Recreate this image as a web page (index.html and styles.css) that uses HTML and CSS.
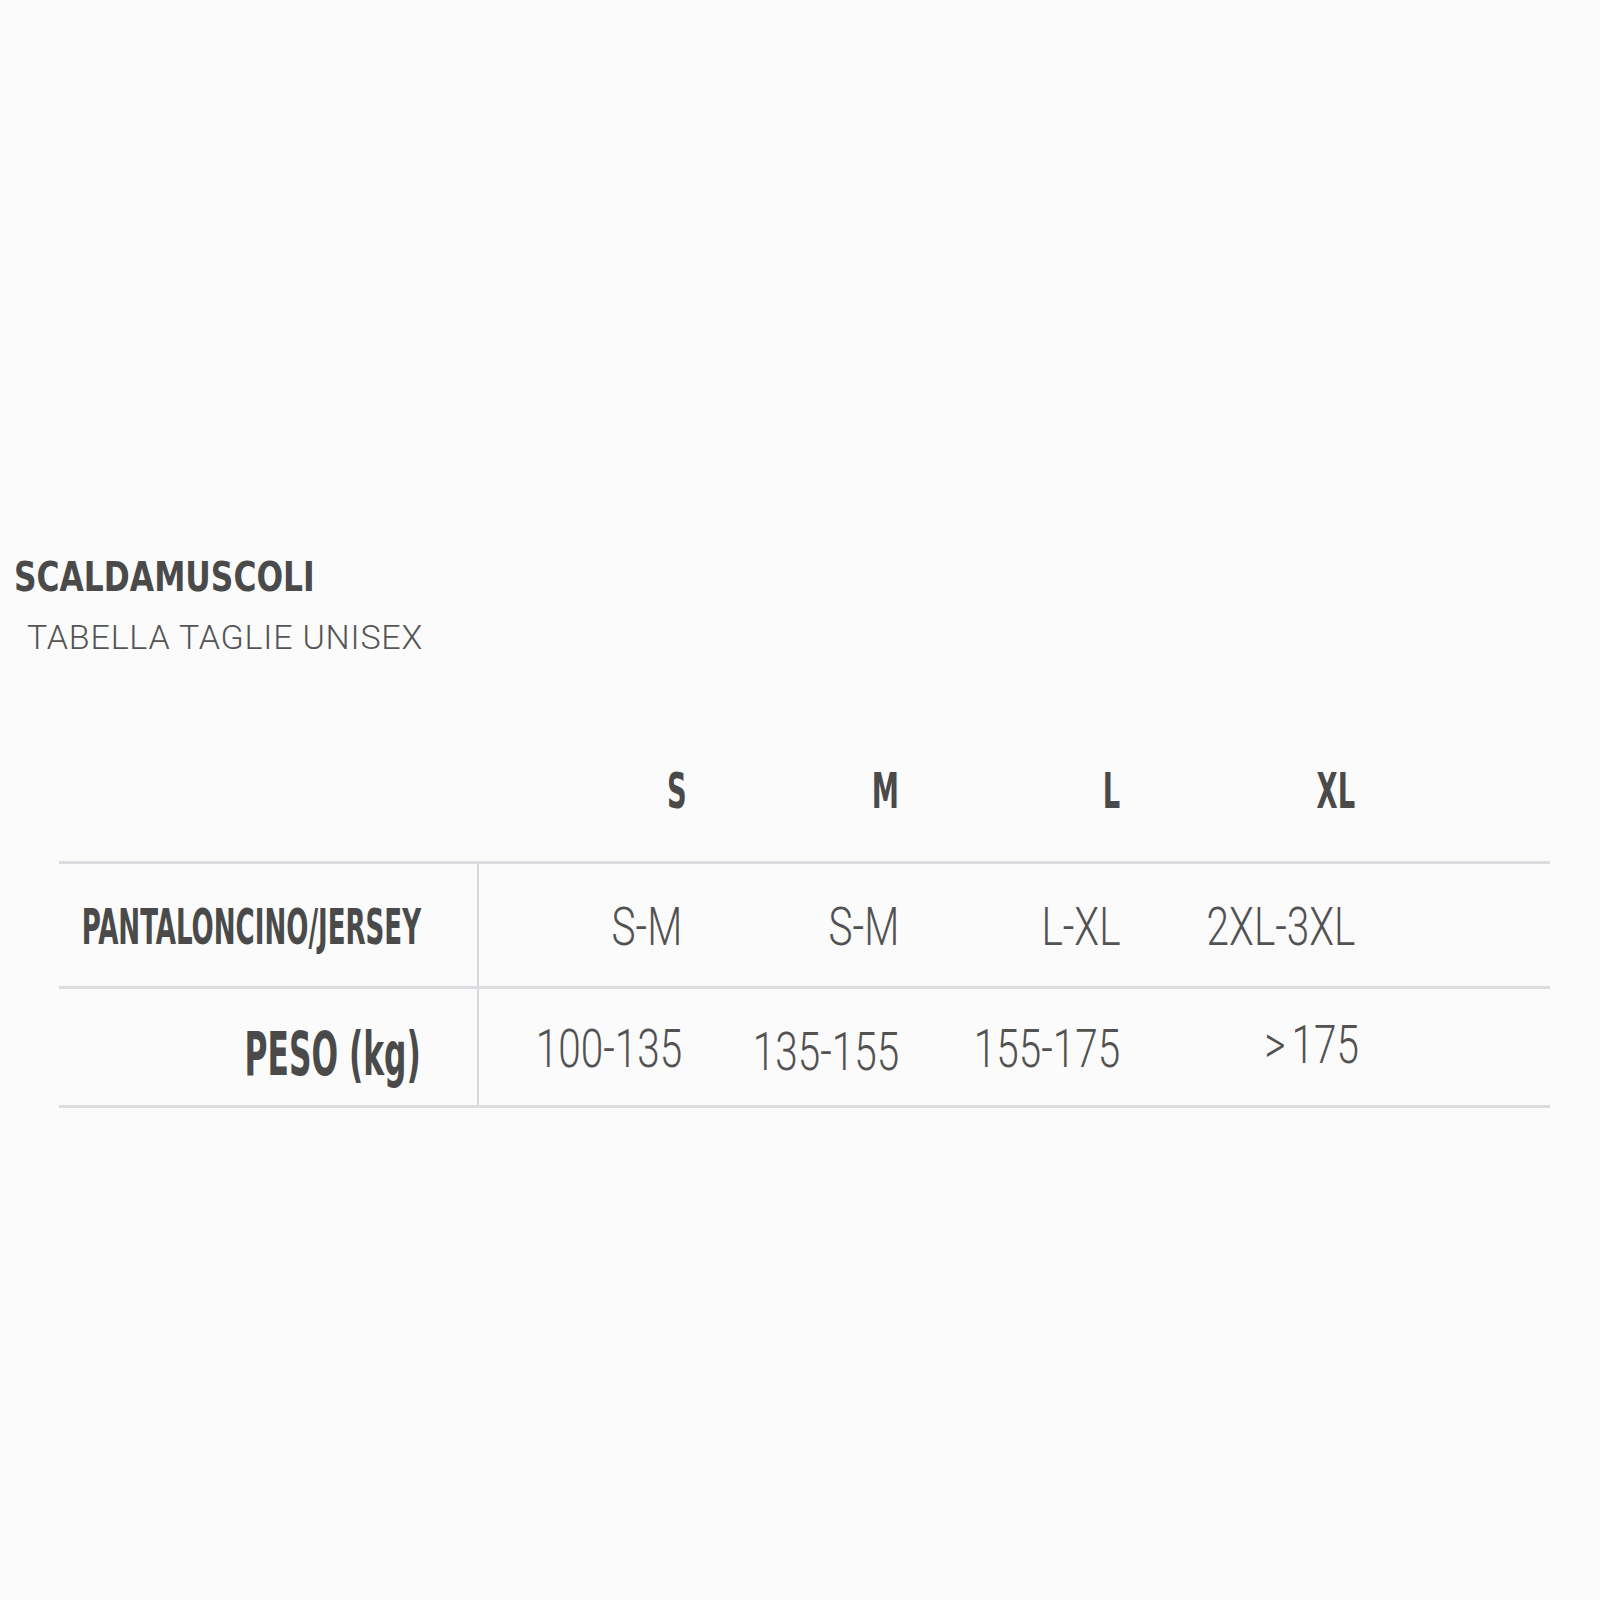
FILE: index.html
```html
<!DOCTYPE html>
<html lang="it">
<head>
<meta charset="utf-8">
<title>Scaldamuscoli - Tabella taglie</title>
<link rel="stylesheet" href="styles.css">
</head>
<body>
<main class="page">
  <header class="heading">
    <h1 class="title"><span class="squeeze">SCALDAMUSCOLI</span></h1>
    <p class="subtitle">TABELLA TAGLIE UNISEX</p>
  </header>
  <section class="size-table">
    <div class="row head">
      <div class="label"></div>
      <div class="cell first"><span class="size">S</span></div>
      <div class="cell"><span class="size">M</span></div>
      <div class="cell"><span class="size">L</span></div>
      <div class="cell"><span class="size">XL</span></div>
      <div class="filler"></div>
    </div>
    <div class="row body-row">
      <div class="label"><span class="label-text">PANTALONCINO/JERSEY</span></div>
      <div class="cell"><span class="value">S-M</span></div>
      <div class="cell"><span class="value">S-M</span></div>
      <div class="cell"><span class="value">L-XL</span></div>
      <div class="cell"><span class="value">2XL-3XL</span></div>
      <div class="filler"></div>
    </div>
    <div class="row body-row last">
      <div class="label"><span class="label-text big">PESO (kg)</span></div>
      <div class="cell"><span class="value">100-135</span></div>
      <div class="cell"><span class="value low">135-155</span></div>
      <div class="cell"><span class="value">155-175</span></div>
      <div class="cell"><span class="value high"><span class="gt">&gt;</span>175</span></div>
      <div class="filler"></div>
    </div>
  </section>
</main>
</body>
</html>
```

FILE: styles.css
```css
html, body {
  margin: 0;
  padding: 0;
  background: #fbfbfb;
}

.page {
  width: 1600px;
  height: 1600px;
  padding-top: 557px;
  box-sizing: border-box;
  color: #4b4b4b;
}

.heading {
  padding-left: 14px;
}

.title {
  margin: 0;
  font-family: "DejaVu Sans Condensed", "DejaVu Sans", sans-serif;
  font-weight: 700;
  font-size: 41px;
  line-height: 1;
  color: #4a4a4a;
}

.squeeze {
  display: inline-block;
  transform: scaleX(0.85);
  transform-origin: left center;
}

.subtitle {
  margin: 22px 0 0 13px;
  font-family: "Roboto", sans-serif;
  font-weight: 300;
  font-size: 34px;
  line-height: 1;
  letter-spacing: 0.8px;
  color: #555555;
}

.size-table {
  margin: 68px 0 0 59px;
  width: 1491px;
}

.row {
  display: grid;
  grid-template-columns: 420px 203px 217px 221px 235px 1fr;
}

.head {
  height: 139px;
}

.body-row {
  border-top: 3px solid #dcdde0;
  height: 122px;
}

.body-row .cell,
.body-row .label {
  padding-top: 4px;
}

.body-row.last {
  height: 116px;
  border-bottom: 3px solid #dcdde0;
}

.label {
  display: flex;
  align-items: center;
  justify-content: flex-end;
  padding-right: 56px;
  box-sizing: border-box;
}

.body-row .label {
  border-right: 2px solid #d9dadd;
}

.cell {
  display: flex;
  align-items: center;
  justify-content: flex-end;
}

.cell.first {
  margin-right: -5px;
}

.size {
  display: inline-block;
  font-family: "DejaVu Sans Condensed", "DejaVu Sans", sans-serif;
  font-weight: 700;
  font-size: 49px;
  line-height: 1;
  transform: scaleX(0.62);
  transform-origin: right center;
  color: #4a4a4a;
}

.label-text {
  display: inline-block;
  font-family: "DejaVu Sans Condensed", "DejaVu Sans", sans-serif;
  font-weight: 700;
  font-size: 50px;
  line-height: 1;
  white-space: nowrap;
  transform: scaleX(0.58);
  transform-origin: right center;
  color: #4a4a4a;
}

.label-text.big {
  font-size: 60px;
  transform: translateY(5px) scaleX(0.58);
}

.value {
  display: inline-block;
  font-family: "Roboto", sans-serif;
  font-weight: 300;
  font-size: 54px;
  line-height: 1;
  white-space: nowrap;
  transform: scaleX(0.75);
  transform-origin: right center;
  color: #525252;
}

.value.low {
  position: relative;
  top: 3px;
}

.value.high {
  position: relative;
  top: -4px;
  margin-right: -4px;
}

.gt {
  display: inline-block;
  margin-right: 8px;
}
```
